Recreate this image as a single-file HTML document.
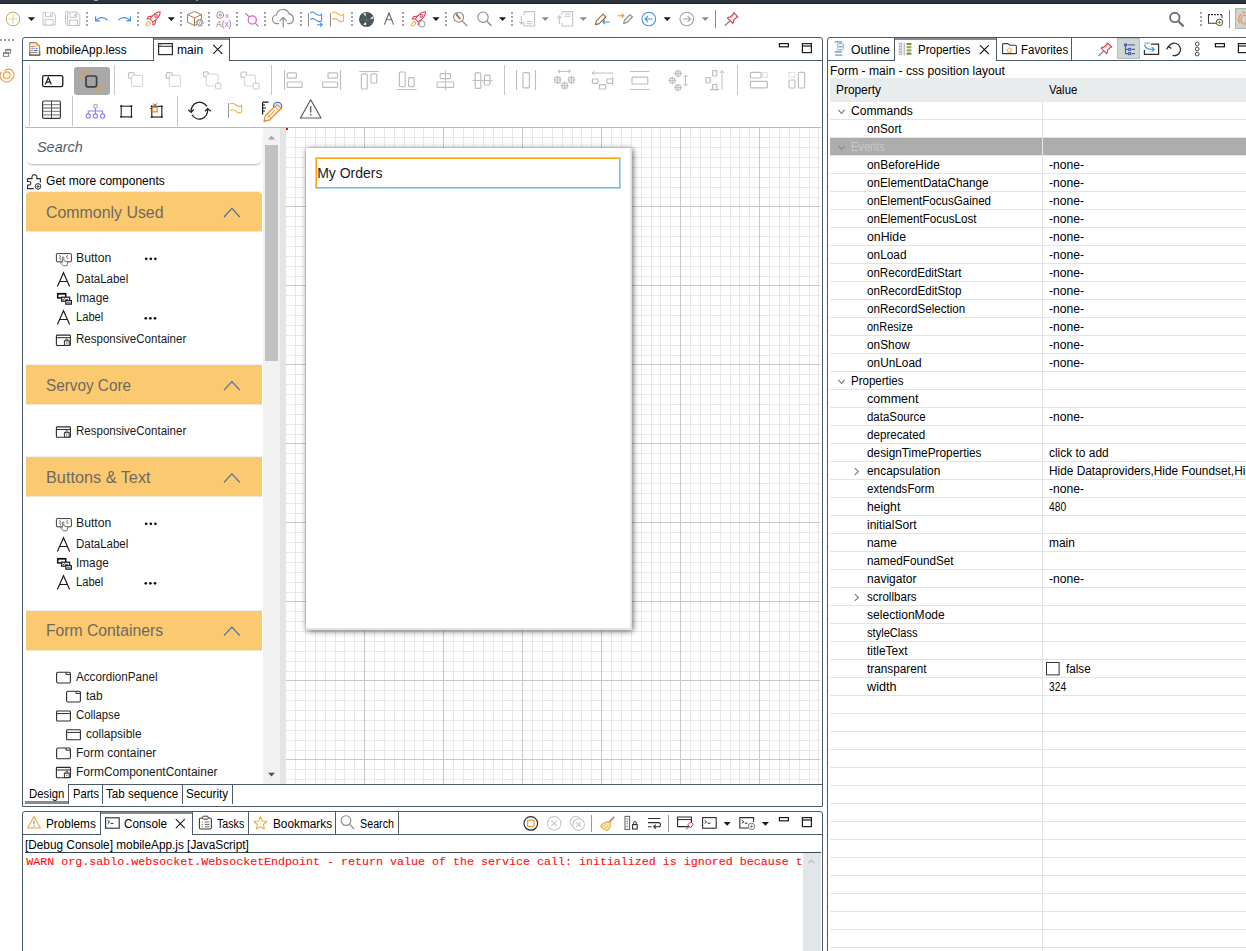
<!DOCTYPE html>
<html><head><meta charset="utf-8"><title>Servoy Developer</title>
<style>
html,body{margin:0;padding:0;}
body{width:1246px;height:951px;position:relative;overflow:hidden;background:#fff;font-family:"Liberation Sans",sans-serif;font-size:12px;}
#bg div{position:absolute;box-sizing:border-box;}
.t{position:absolute;white-space:pre;line-height:1;transform-origin:0 0;}
#ic{position:absolute;left:0;top:0;}
</style></head><body>
<div id="bg">
<div style="left:0px;top:0px;width:1246px;height:4px;background:#2a323b;"></div>
<div style="left:0px;top:3px;width:1246px;height:1px;background:#1c242c;"></div>
<div style="left:94px;top:0px;width:4px;height:1px;background:#9aa3b5;"></div>
<div style="left:196px;top:0px;width:2px;height:1px;background:#8a93a5;"></div>
<div style="left:22px;top:37px;width:801px;height:770px;background:#fff;border:1px solid #4b5a69;border-radius:3px 3px 0 0;"></div>
<div style="left:22px;top:60px;width:132px;height:1px;background:#4b5a69;"></div>
<div style="left:229px;top:60px;width:594px;height:1px;background:#4b5a69;"></div>
<div style="left:153px;top:38px;width:1px;height:23px;background:#4b5a69;"></div>
<div style="left:154px;top:38px;width:76px;height:2px;background:#8c8c8c;"></div>
<div style="left:229px;top:38px;width:1px;height:23px;background:#4b5a69;"></div>
<div style="left:29px;top:65px;width:1px;height:61px;background:#c6c6c6;"></div>
<div style="left:114px;top:65px;width:1px;height:30px;background:#c6c6c6;"></div>
<div style="left:271px;top:65px;width:1px;height:30px;background:#c6c6c6;"></div>
<div style="left:504px;top:65px;width:1px;height:30px;background:#c6c6c6;"></div>
<div style="left:737px;top:65px;width:1px;height:30px;background:#c6c6c6;"></div>
<div style="left:72px;top:96px;width:1px;height:30px;background:#c6c6c6;"></div>
<div style="left:177px;top:96px;width:1px;height:30px;background:#c6c6c6;"></div>
<div style="left:25px;top:127px;width:796px;height:1px;background:#b9b9b9;"></div>
<div style="left:74px;top:67px;width:36px;height:28px;background:#a9a9a9;border-radius:3px;"></div>
<div style="left:26px;top:128px;width:236px;height:36px;background:#fff;border-radius:0 0 6px 6px;box-shadow:0 2px 2px -1px rgba(0,0,0,.3);"></div>
<div style="left:26px;top:191px;width:236px;height:1px;background:#eef0f3;"></div>
<div style="left:26px;top:192px;width:236px;height:39px;background:#fbc96f;border-radius:4px 4px 0 0;"></div>
<div style="left:26px;top:231px;width:236px;height:1px;background:#f0e6cf;"></div>
<div style="left:26px;top:364px;width:236px;height:1px;background:#eef0f3;"></div>
<div style="left:26px;top:365px;width:236px;height:39px;background:#fbc96f;"></div>
<div style="left:26px;top:404px;width:236px;height:1px;background:#f0e6cf;"></div>
<div style="left:26px;top:456px;width:236px;height:1px;background:#eef0f3;"></div>
<div style="left:26px;top:457px;width:236px;height:39px;background:#fbc96f;"></div>
<div style="left:26px;top:496px;width:236px;height:1px;background:#f0e6cf;"></div>
<div style="left:26px;top:610px;width:236px;height:1px;background:#eef0f3;"></div>
<div style="left:26px;top:611px;width:236px;height:39px;background:#fbc96f;"></div>
<div style="left:26px;top:650px;width:236px;height:1px;background:#f0e6cf;"></div>
<div style="left:263px;top:128px;width:17px;height:656px;background:#f1f1f1;"></div>
<div style="left:265px;top:145px;width:13px;height:216px;background:#c1c1c1;"></div>
<div style="left:280px;top:128px;width:6px;height:656px;background:#e4e4e4;"></div>
<div style="left:286px;top:128px;width:534px;height:656px;background:#fff;"></div>
<svg style="position:absolute;left:0;top:0" width="1246" height="951" viewBox="0 0 1246 951"><rect x="295" y="128" width="1" height="656" fill="#e8e8e8"/><rect x="305" y="128" width="1" height="656" fill="#e8e8e8"/><rect x="315" y="128" width="1" height="656" fill="#e8e8e8"/><rect x="325" y="128" width="1" height="656" fill="#e8e8e8"/><rect x="335" y="128" width="1" height="656" fill="#e8e8e8"/><rect x="344" y="128" width="1" height="656" fill="#e8e8e8"/><rect x="354" y="128" width="1" height="656" fill="#e8e8e8"/><rect x="286" y="137" width="534" height="1" fill="#e8e8e8"/><rect x="286" y="147" width="534" height="1" fill="#e8e8e8"/><rect x="286" y="157" width="534" height="1" fill="#e8e8e8"/><rect x="286" y="167" width="534" height="1" fill="#e8e8e8"/><rect x="286" y="177" width="534" height="1" fill="#e8e8e8"/><rect x="286" y="187" width="534" height="1" fill="#e8e8e8"/><rect x="286" y="197" width="534" height="1" fill="#e8e8e8"/><rect x="374" y="128" width="1" height="656" fill="#e8e8e8"/><rect x="384" y="128" width="1" height="656" fill="#e8e8e8"/><rect x="394" y="128" width="1" height="656" fill="#e8e8e8"/><rect x="404" y="128" width="1" height="656" fill="#e8e8e8"/><rect x="414" y="128" width="1" height="656" fill="#e8e8e8"/><rect x="423" y="128" width="1" height="656" fill="#e8e8e8"/><rect x="433" y="128" width="1" height="656" fill="#e8e8e8"/><rect x="286" y="216" width="534" height="1" fill="#e8e8e8"/><rect x="286" y="226" width="534" height="1" fill="#e8e8e8"/><rect x="286" y="236" width="534" height="1" fill="#e8e8e8"/><rect x="286" y="246" width="534" height="1" fill="#e8e8e8"/><rect x="286" y="256" width="534" height="1" fill="#e8e8e8"/><rect x="286" y="266" width="534" height="1" fill="#e8e8e8"/><rect x="286" y="276" width="534" height="1" fill="#e8e8e8"/><rect x="453" y="128" width="1" height="656" fill="#e8e8e8"/><rect x="463" y="128" width="1" height="656" fill="#e8e8e8"/><rect x="473" y="128" width="1" height="656" fill="#e8e8e8"/><rect x="483" y="128" width="1" height="656" fill="#e8e8e8"/><rect x="493" y="128" width="1" height="656" fill="#e8e8e8"/><rect x="502" y="128" width="1" height="656" fill="#e8e8e8"/><rect x="512" y="128" width="1" height="656" fill="#e8e8e8"/><rect x="286" y="295" width="534" height="1" fill="#e8e8e8"/><rect x="286" y="305" width="534" height="1" fill="#e8e8e8"/><rect x="286" y="315" width="534" height="1" fill="#e8e8e8"/><rect x="286" y="325" width="534" height="1" fill="#e8e8e8"/><rect x="286" y="335" width="534" height="1" fill="#e8e8e8"/><rect x="286" y="345" width="534" height="1" fill="#e8e8e8"/><rect x="286" y="355" width="534" height="1" fill="#e8e8e8"/><rect x="532" y="128" width="1" height="656" fill="#e8e8e8"/><rect x="542" y="128" width="1" height="656" fill="#e8e8e8"/><rect x="552" y="128" width="1" height="656" fill="#e8e8e8"/><rect x="562" y="128" width="1" height="656" fill="#e8e8e8"/><rect x="572" y="128" width="1" height="656" fill="#e8e8e8"/><rect x="581" y="128" width="1" height="656" fill="#e8e8e8"/><rect x="591" y="128" width="1" height="656" fill="#e8e8e8"/><rect x="286" y="374" width="534" height="1" fill="#e8e8e8"/><rect x="286" y="384" width="534" height="1" fill="#e8e8e8"/><rect x="286" y="394" width="534" height="1" fill="#e8e8e8"/><rect x="286" y="404" width="534" height="1" fill="#e8e8e8"/><rect x="286" y="414" width="534" height="1" fill="#e8e8e8"/><rect x="286" y="424" width="534" height="1" fill="#e8e8e8"/><rect x="286" y="434" width="534" height="1" fill="#e8e8e8"/><rect x="611" y="128" width="1" height="656" fill="#e8e8e8"/><rect x="621" y="128" width="1" height="656" fill="#e8e8e8"/><rect x="631" y="128" width="1" height="656" fill="#e8e8e8"/><rect x="641" y="128" width="1" height="656" fill="#e8e8e8"/><rect x="651" y="128" width="1" height="656" fill="#e8e8e8"/><rect x="660" y="128" width="1" height="656" fill="#e8e8e8"/><rect x="670" y="128" width="1" height="656" fill="#e8e8e8"/><rect x="286" y="453" width="534" height="1" fill="#e8e8e8"/><rect x="286" y="463" width="534" height="1" fill="#e8e8e8"/><rect x="286" y="473" width="534" height="1" fill="#e8e8e8"/><rect x="286" y="483" width="534" height="1" fill="#e8e8e8"/><rect x="286" y="493" width="534" height="1" fill="#e8e8e8"/><rect x="286" y="503" width="534" height="1" fill="#e8e8e8"/><rect x="286" y="513" width="534" height="1" fill="#e8e8e8"/><rect x="690" y="128" width="1" height="656" fill="#e8e8e8"/><rect x="700" y="128" width="1" height="656" fill="#e8e8e8"/><rect x="710" y="128" width="1" height="656" fill="#e8e8e8"/><rect x="720" y="128" width="1" height="656" fill="#e8e8e8"/><rect x="730" y="128" width="1" height="656" fill="#e8e8e8"/><rect x="739" y="128" width="1" height="656" fill="#e8e8e8"/><rect x="749" y="128" width="1" height="656" fill="#e8e8e8"/><rect x="286" y="532" width="534" height="1" fill="#e8e8e8"/><rect x="286" y="542" width="534" height="1" fill="#e8e8e8"/><rect x="286" y="552" width="534" height="1" fill="#e8e8e8"/><rect x="286" y="562" width="534" height="1" fill="#e8e8e8"/><rect x="286" y="572" width="534" height="1" fill="#e8e8e8"/><rect x="286" y="582" width="534" height="1" fill="#e8e8e8"/><rect x="286" y="592" width="534" height="1" fill="#e8e8e8"/><rect x="769" y="128" width="1" height="656" fill="#e8e8e8"/><rect x="779" y="128" width="1" height="656" fill="#e8e8e8"/><rect x="789" y="128" width="1" height="656" fill="#e8e8e8"/><rect x="799" y="128" width="1" height="656" fill="#e8e8e8"/><rect x="809" y="128" width="1" height="656" fill="#e8e8e8"/><rect x="818" y="128" width="1" height="656" fill="#e8e8e8"/><rect x="286" y="611" width="534" height="1" fill="#e8e8e8"/><rect x="286" y="621" width="534" height="1" fill="#e8e8e8"/><rect x="286" y="631" width="534" height="1" fill="#e8e8e8"/><rect x="286" y="641" width="534" height="1" fill="#e8e8e8"/><rect x="286" y="651" width="534" height="1" fill="#e8e8e8"/><rect x="286" y="661" width="534" height="1" fill="#e8e8e8"/><rect x="286" y="671" width="534" height="1" fill="#e8e8e8"/><rect x="286" y="690" width="534" height="1" fill="#e8e8e8"/><rect x="286" y="700" width="534" height="1" fill="#e8e8e8"/><rect x="286" y="710" width="534" height="1" fill="#e8e8e8"/><rect x="286" y="720" width="534" height="1" fill="#e8e8e8"/><rect x="286" y="730" width="534" height="1" fill="#e8e8e8"/><rect x="286" y="740" width="534" height="1" fill="#e8e8e8"/><rect x="286" y="750" width="534" height="1" fill="#e8e8e8"/><rect x="286" y="769" width="534" height="1" fill="#e8e8e8"/><rect x="286" y="779" width="534" height="1" fill="#e8e8e8"/><rect x="364" y="128" width="1" height="656" fill="#c8c8c8"/><rect x="286" y="206" width="534" height="1" fill="#c8c8c8"/><rect x="443" y="128" width="1" height="656" fill="#c8c8c8"/><rect x="286" y="285" width="534" height="1" fill="#c8c8c8"/><rect x="522" y="128" width="1" height="656" fill="#c8c8c8"/><rect x="286" y="364" width="534" height="1" fill="#c8c8c8"/><rect x="601" y="128" width="1" height="656" fill="#c8c8c8"/><rect x="286" y="443" width="534" height="1" fill="#c8c8c8"/><rect x="680" y="128" width="1" height="656" fill="#c8c8c8"/><rect x="286" y="522" width="534" height="1" fill="#c8c8c8"/><rect x="759" y="128" width="1" height="656" fill="#c8c8c8"/><rect x="286" y="601" width="534" height="1" fill="#c8c8c8"/><rect x="286" y="680" width="534" height="1" fill="#c8c8c8"/><rect x="286" y="759" width="534" height="1" fill="#c8c8c8"/></svg>
<div style="left:286px;top:128px;width:2px;height:2px;background:#f00;"></div>
<div style="left:306px;top:148px;width:326px;height:482px;background:#fff;border:1px solid #e3e3e3;border-width:0 2px 2px 0;box-shadow:1px 1px 6px rgba(0,0,0,.6);"></div>
<div style="left:315px;top:157px;width:306px;height:32px;background:#fff;border:1px solid #a9daf3;box-shadow:inset 0 0 0 1px #f5a418;"></div>
<div style="left:23px;top:784px;width:799px;height:1px;background:#4b5a69;"></div>
<div style="left:23px;top:785px;width:45px;height:19px;background:#fff;"></div>
<div style="left:23px;top:784px;width:45px;height:1px;background:#fff;"></div>
<div style="left:68px;top:784px;width:1px;height:20px;background:#4b5a69;"></div>
<div style="left:102px;top:784px;width:1px;height:20px;background:#4b5a69;"></div>
<div style="left:182px;top:784px;width:1px;height:20px;background:#4b5a69;"></div>
<div style="left:232px;top:784px;width:1px;height:20px;background:#4b5a69;"></div>
<div style="left:25px;top:801px;width:43px;height:3px;background:#8a8a8a;"></div>
<div style="left:22px;top:811px;width:801px;height:160px;background:#fff;border:1px solid #4b5a69;border-radius:3px 3px 0 0;"></div>
<div style="left:22px;top:834px;width:78px;height:1px;background:#4b5a69;"></div>
<div style="left:192px;top:834px;width:631px;height:1px;background:#4b5a69;"></div>
<div style="left:100px;top:812px;width:1px;height:23px;background:#4b5a69;"></div>
<div style="left:101px;top:812px;width:91px;height:2px;background:#8c8c8c;"></div>
<div style="left:192px;top:812px;width:1px;height:23px;background:#4b5a69;"></div>
<div style="left:248px;top:812px;width:1px;height:23px;background:#4b5a69;"></div>
<div style="left:335px;top:812px;width:1px;height:23px;background:#4b5a69;"></div>
<div style="left:398px;top:812px;width:1px;height:23px;background:#4b5a69;"></div>
<div style="left:591px;top:815px;width:1px;height:17px;background:#9a9a9a;"></div>
<div style="left:668px;top:815px;width:1px;height:17px;background:#9a9a9a;"></div>
<div style="left:25px;top:852px;width:796px;height:1px;background:#3a4650;"></div>
<div style="left:803px;top:853px;width:18px;height:100px;background:#e2e6e9;"></div>
<div style="left:827px;top:37px;width:430px;height:930px;background:#fff;border:1px solid #4b5a69;border-radius:3px 0 0 0;"></div>
<div style="left:828px;top:60px;width:67px;height:1px;background:#4b5a69;"></div>
<div style="left:996px;top:60px;width:250px;height:1px;background:#4b5a69;"></div>
<div style="left:894px;top:38px;width:1px;height:23px;background:#4b5a69;"></div>
<div style="left:895px;top:38px;width:101px;height:2px;background:#8c8c8c;"></div>
<div style="left:996px;top:38px;width:1px;height:23px;background:#4b5a69;"></div>
<div style="left:1071px;top:38px;width:1px;height:23px;background:#4b5a69;"></div>
<div style="left:1117px;top:38px;width:23px;height:21px;background:#cfd6d5;border:1px solid #b4bebc;"></div>
<div style="left:830px;top:78px;width:420px;height:24px;background:#e9eced;"></div>
<div style="left:830px;top:119px;width:416px;height:1px;background:#e3e3e3;"></div>
<div style="left:830px;top:137px;width:416px;height:1px;background:#e3e3e3;"></div>
<div style="left:830px;top:155px;width:416px;height:1px;background:#e3e3e3;"></div>
<div style="left:830px;top:173px;width:416px;height:1px;background:#e3e3e3;"></div>
<div style="left:830px;top:191px;width:416px;height:1px;background:#e3e3e3;"></div>
<div style="left:830px;top:209px;width:416px;height:1px;background:#e3e3e3;"></div>
<div style="left:830px;top:227px;width:416px;height:1px;background:#e3e3e3;"></div>
<div style="left:830px;top:245px;width:416px;height:1px;background:#e3e3e3;"></div>
<div style="left:830px;top:263px;width:416px;height:1px;background:#e3e3e3;"></div>
<div style="left:830px;top:281px;width:416px;height:1px;background:#e3e3e3;"></div>
<div style="left:830px;top:299px;width:416px;height:1px;background:#e3e3e3;"></div>
<div style="left:830px;top:317px;width:416px;height:1px;background:#e3e3e3;"></div>
<div style="left:830px;top:335px;width:416px;height:1px;background:#e3e3e3;"></div>
<div style="left:830px;top:353px;width:416px;height:1px;background:#e3e3e3;"></div>
<div style="left:830px;top:371px;width:416px;height:1px;background:#e3e3e3;"></div>
<div style="left:830px;top:389px;width:416px;height:1px;background:#e3e3e3;"></div>
<div style="left:830px;top:407px;width:416px;height:1px;background:#e3e3e3;"></div>
<div style="left:830px;top:425px;width:416px;height:1px;background:#e3e3e3;"></div>
<div style="left:830px;top:443px;width:416px;height:1px;background:#e3e3e3;"></div>
<div style="left:830px;top:461px;width:416px;height:1px;background:#e3e3e3;"></div>
<div style="left:830px;top:479px;width:416px;height:1px;background:#e3e3e3;"></div>
<div style="left:830px;top:497px;width:416px;height:1px;background:#e3e3e3;"></div>
<div style="left:830px;top:515px;width:416px;height:1px;background:#e3e3e3;"></div>
<div style="left:830px;top:533px;width:416px;height:1px;background:#e3e3e3;"></div>
<div style="left:830px;top:551px;width:416px;height:1px;background:#e3e3e3;"></div>
<div style="left:830px;top:569px;width:416px;height:1px;background:#e3e3e3;"></div>
<div style="left:830px;top:587px;width:416px;height:1px;background:#e3e3e3;"></div>
<div style="left:830px;top:605px;width:416px;height:1px;background:#e3e3e3;"></div>
<div style="left:830px;top:623px;width:416px;height:1px;background:#e3e3e3;"></div>
<div style="left:830px;top:641px;width:416px;height:1px;background:#e3e3e3;"></div>
<div style="left:830px;top:659px;width:416px;height:1px;background:#e3e3e3;"></div>
<div style="left:830px;top:677px;width:416px;height:1px;background:#e3e3e3;"></div>
<div style="left:830px;top:695px;width:416px;height:1px;background:#e3e3e3;"></div>
<div style="left:830px;top:713px;width:416px;height:1px;background:#e3e3e3;"></div>
<div style="left:830px;top:731px;width:416px;height:1px;background:#e3e3e3;"></div>
<div style="left:830px;top:749px;width:416px;height:1px;background:#e3e3e3;"></div>
<div style="left:830px;top:767px;width:416px;height:1px;background:#e3e3e3;"></div>
<div style="left:830px;top:785px;width:416px;height:1px;background:#e3e3e3;"></div>
<div style="left:830px;top:803px;width:416px;height:1px;background:#e3e3e3;"></div>
<div style="left:830px;top:821px;width:416px;height:1px;background:#e3e3e3;"></div>
<div style="left:830px;top:839px;width:416px;height:1px;background:#e3e3e3;"></div>
<div style="left:830px;top:857px;width:416px;height:1px;background:#e3e3e3;"></div>
<div style="left:830px;top:875px;width:416px;height:1px;background:#e3e3e3;"></div>
<div style="left:830px;top:893px;width:416px;height:1px;background:#e3e3e3;"></div>
<div style="left:830px;top:911px;width:416px;height:1px;background:#e3e3e3;"></div>
<div style="left:830px;top:929px;width:416px;height:1px;background:#e3e3e3;"></div>
<div style="left:830px;top:947px;width:416px;height:1px;background:#e3e3e3;"></div>
<div style="left:830px;top:138px;width:420px;height:17px;background:#adadad;"></div>
<div style="left:1042px;top:102px;width:1px;height:849px;background:#e3e3e3;"></div>
<div style="left:1042px;top:138px;width:1px;height:17px;background:#e9e9e9;"></div>
<div style="left:1229px;top:10px;width:1px;height:18px;background:#8a8a8a;"></div>
<div style="left:1235px;top:8px;width:14px;height:21px;background:#cdd5d3;border:1px solid #aab5b3;"></div>
<div style="left:715px;top:10px;width:1px;height:18px;background:#8a8a8a;"></div>
</div>
<svg id="ic" width="1246" height="951" viewBox="0 0 1246 951" fill="none" stroke-linecap="butt">
<path d="M838.3 109.9 L841.5 113.3 L844.7 109.9" stroke="#7d7d7d" stroke-width="1.15"/>
<path d="M838.3 145.9 L841.5 149.3 L844.7 145.9" stroke="#8c8c8c" stroke-width="1.15"/>
<path d="M838.3 379.9 L841.5 383.3 L844.7 379.9" stroke="#7d7d7d" stroke-width="1.15"/>
<path d="M854.8 468.1 L858.4 471.5 L854.8 474.9" stroke="#7d7d7d" stroke-width="1.15"/>
<path d="M854.8 594.1 L858.4 597.5 L854.8 600.9" stroke="#7d7d7d" stroke-width="1.15"/>
<rect x="1046.5" y="662.5" width="12.6" height="12.4" fill="#fff" stroke="#333" stroke-width="1"/>
<circle cx="13" cy="19" r="6.8" stroke="#b7a656" stroke-width="1"/><path d="M13 14.3V23.7" stroke="#e8cf8e" stroke-width="1.1"/><path d="M8.3 19H17.7" stroke="#d3e09a" stroke-width="1.1"/>
<path d="M27.799999999999997 17.3h7.2l-3.6 3.8z" fill="#1a1a1a"/>
<g stroke="#c6c6c6" stroke-width="1" fill="#fff"><path d="M43.0 12.5h10.3l2 2v10.5h-12.3z"/><path d="M45.5 12.5v4.3h6.8v-4.3" fill="#fff"/><rect x="49.7" y="13.6" width="1.6" height="2.2" fill="#c6c6c6" stroke="none"/><rect x="45.1" y="19.6" width="8" height="5.4"/></g>
<g stroke="#cdcdcd" stroke-width="1" fill="#fff"><path d="M65.5 11.5h10.3l2 2v10.5h-12.3z"/><path d="M68 11.5v4.3h6.8v-4.3" fill="#fff"/><rect x="72.2" y="12.6" width="1.6" height="2.2" fill="#cdcdcd" stroke="none"/><rect x="67.6" y="18.6" width="8" height="5.4"/></g>
<g stroke="#c2c2c2" stroke-width="1" fill="#fff"><path d="M67.5 13.0h10.3l2 2v10.5h-12.3z"/><path d="M70 13.0v4.3h6.8v-4.3" fill="#fff"/><rect x="74.2" y="14.1" width="1.6" height="2.2" fill="#c2c2c2" stroke="none"/><rect x="69.6" y="20.1" width="8" height="5.4"/></g>
<rect x="86" y="12" width="2" height="2" fill="#a3a3a3"/>
<rect x="86" y="16" width="2" height="2" fill="#a3a3a3"/>
<rect x="86" y="20" width="2" height="2" fill="#a3a3a3"/>
<rect x="86" y="24" width="2" height="2" fill="#a3a3a3"/>
<path d="M95.6 16.6v4.2h4.2" stroke="#3d8fe8" stroke-width="1.2"/><path d="M96 20.5C98.5 17.3 103.8 16.2 107.6 20.2" stroke="#3d8fe8" stroke-width="1.2"/>
<path d="M130.4 16.6v4.2h-4.2" stroke="#3d8fe8" stroke-width="1.2"/><path d="M130 20.5C127.5 17.3 122.2 16.2 118.4 20.2" stroke="#3d8fe8" stroke-width="1.2"/>
<rect x="137" y="12" width="2" height="2" fill="#a3a3a3"/>
<rect x="137" y="16" width="2" height="2" fill="#a3a3a3"/>
<rect x="137" y="20" width="2" height="2" fill="#a3a3a3"/>
<rect x="137" y="24" width="2" height="2" fill="#a3a3a3"/>
<g transform="translate(155.3 16.6) rotate(45)" stroke="#e8364a" stroke-width="1" stroke-linejoin="round"><path d="M0 -7C2.6 -4.3 3.2 0.5 2 5.4H-2C-3.2 0.5 -2.6 -4.3 0 -7Z"/><circle cx="0" cy="-1" r="1.3"/><path d="M-2.7 2L-4.9 5.2L-4.2 7.6L-2.1 5.6M2.7 2L4.9 5.2L4.2 7.6L2.1 5.6"/><ellipse cx="0" cy="10" rx="1.5" ry="2.5" stroke="#f5a845"/></g>
<path d="M167.70000000000002 17.3h7.2l-3.6 3.8z" fill="#1a1a1a"/>
<rect x="180" y="12" width="2" height="2" fill="#a3a3a3"/>
<rect x="180" y="16" width="2" height="2" fill="#a3a3a3"/>
<rect x="180" y="20" width="2" height="2" fill="#a3a3a3"/>
<rect x="180" y="24" width="2" height="2" fill="#a3a3a3"/>
<g stroke="#a9794b" stroke-width="1" stroke-linejoin="round"><path d="M194.5 11.5L201.5 14.6V22.2L194.5 25.6L187.5 22.2V14.6Z"/><path d="M187.5 14.6L194.5 17.9L201.5 14.6M194.5 17.9V25.6"/></g><circle cx="199.6" cy="22.8" r="3.4" fill="#fff" stroke="#8d8d8d" stroke-width="1.2" stroke-dasharray="1.6 1"/><circle cx="199.6" cy="22.8" r="2.4" fill="#fff" stroke="#8d8d8d" stroke-width="1"/><circle cx="199.6" cy="22.8" r="0.8" fill="#8d8d8d"/>
<rect x="208" y="12" width="2" height="2" fill="#a3a3a3"/>
<rect x="208" y="16" width="2" height="2" fill="#a3a3a3"/>
<rect x="208" y="20" width="2" height="2" fill="#a3a3a3"/>
<rect x="208" y="24" width="2" height="2" fill="#a3a3a3"/>
<g font-family="Liberation Sans, sans-serif" font-size="8.5" stroke="none"><circle cx="220.2" cy="15" r="3.4" stroke="#8d8d8d" stroke-width="0.9" fill="none"/><circle cx="220.2" cy="15" r="1.2" stroke="#8d8d8d" stroke-width="0.9" fill="none"/><text x="225" y="17.6" fill="#e65ac8" font-size="8">x</text><text x="216" y="26.6" fill="#7d7d7d">A(</text><text x="224.6" y="26.6" fill="#e65ac8">x</text><text x="228.6" y="26.6" fill="#7d7d7d">)</text></g>
<rect x="236" y="12" width="2" height="2" fill="#a3a3a3"/>
<rect x="236" y="16" width="2" height="2" fill="#a3a3a3"/>
<rect x="236" y="20" width="2" height="2" fill="#a3a3a3"/>
<rect x="236" y="24" width="2" height="2" fill="#a3a3a3"/>
<circle cx="252.3" cy="20" r="4.1" stroke="#ea5cc8" stroke-width="1.3"/><path d="M255.4 23.2L258.3 26.3" stroke="#8d8d8d" stroke-width="1.2"/><path d="M245.4 13.2L249.3 17" stroke="#8d8d8d" stroke-width="1.1"/>
<rect x="264" y="12" width="2" height="2" fill="#a3a3a3"/>
<rect x="264" y="16" width="2" height="2" fill="#a3a3a3"/>
<rect x="264" y="20" width="2" height="2" fill="#a3a3a3"/>
<rect x="264" y="24" width="2" height="2" fill="#a3a3a3"/>
<g stroke="#8b8b8b" stroke-width="1.2" stroke-linecap="round" stroke-linejoin="round"><path d="M278.6 23.6h-1.6a4.3 4.3 0 0 1 -0.4 -8.6a6.4 6.4 0 0 1 12.4 -1.2a5 5 0 0 1 0.6 9.8h-1.9"/><path d="M283.2 27V17.6M280 20.6L283.2 17.4L286.4 20.6"/></g>
<rect x="300" y="12" width="2" height="2" fill="#a3a3a3"/>
<rect x="300" y="16" width="2" height="2" fill="#a3a3a3"/>
<rect x="300" y="20" width="2" height="2" fill="#a3a3a3"/>
<rect x="300" y="24" width="2" height="2" fill="#a3a3a3"/>
<path d="M308.5 13V26.6" stroke="#8d8d8d" stroke-width="1"/><path d="M310.2 13C312.4 11 314.4 12.4 316 13.8C317.6 15.2 319.6 16 321.6 14.2V20.6C319.6 22.4 317.6 21.6 316 20.2C314.4 18.8 312.4 17.6 310.2 19.6" stroke="#3d8fe8" stroke-width="1.05" stroke-linejoin="round"/><path d="M317 24.7H322M320.2 22.8L322.2 24.7L320.2 26.6" stroke="#3d8fe8" stroke-width="1.05"/>
<path d="M330.5 13V26.6" stroke="#8d8d8d" stroke-width="1"/><path d="M332.2 13C334.4 11 336.4 12.4 338 13.8C339.6 15.2 341.6 16 343.6 14.2V20.6C341.6 22.4 339.6 21.6 338 20.2C336.4 18.8 334.4 17.6 332.2 19.6" stroke="#f5aa45" stroke-width="1.05" stroke-linejoin="round"/>
<rect x="351" y="12" width="2" height="2" fill="#a3a3a3"/>
<rect x="351" y="16" width="2" height="2" fill="#a3a3a3"/>
<rect x="351" y="20" width="2" height="2" fill="#a3a3a3"/>
<rect x="351" y="24" width="2" height="2" fill="#a3a3a3"/>
<circle cx="366.5" cy="19.4" r="7.5" fill="#45525b"/><path d="M361 15L372 24M366.5 12V27M359.5 19.8H373.5" stroke="#5d7a63" stroke-width="0.6"/><g fill="#f4f6f6"><path d="M363 13.6L365.9 13.2L365.6 16.6Z"/><path d="M370 18.7L372.7 16.2L373 18.9Z"/><path d="M363.2 24.3L366 22L366 25.5Z"/></g>
<path d="M384.4 24.6L389 13L393.6 24.6" stroke="#5a5a5a" stroke-width="1.05"/><path d="M386.4 19.7H391.6" stroke="#5c68a8" stroke-width="1"/>
<rect x="402" y="12" width="2" height="2" fill="#a3a3a3"/>
<rect x="402" y="16" width="2" height="2" fill="#a3a3a3"/>
<rect x="402" y="20" width="2" height="2" fill="#a3a3a3"/>
<rect x="402" y="24" width="2" height="2" fill="#a3a3a3"/>
<g transform="translate(420.6 16.6) rotate(45)" stroke="#e8364a" stroke-width="1" stroke-linejoin="round"><path d="M0 -7C2.6 -4.3 3.2 0.5 2 5.4H-2C-3.2 0.5 -2.6 -4.3 0 -7Z"/><circle cx="0" cy="-1" r="1.3"/><path d="M-2.7 2L-4.9 5.2L-4.2 7.6L-2.1 5.6M2.7 2L4.9 5.2L4.2 7.6L2.1 5.6"/><ellipse cx="0" cy="10" rx="1.5" ry="2.5" stroke="#f5a845"/></g>
<circle cx="422" cy="24" r="3.1" fill="#fff" stroke="#9a9a9a" stroke-width="1"/>
<path d="M432.4 17.3h7.2l-3.6 3.8z" fill="#1a1a1a"/>
<rect x="445" y="12" width="2" height="2" fill="#a3a3a3"/>
<rect x="445" y="16" width="2" height="2" fill="#a3a3a3"/>
<rect x="445" y="20" width="2" height="2" fill="#a3a3a3"/>
<rect x="445" y="24" width="2" height="2" fill="#a3a3a3"/>
<circle cx="458.6" cy="17.2" r="5" stroke="#8b8b8b" stroke-width="1.1"/><path d="M462.2 20.9L467.2 26" stroke="#8b8b8b" stroke-width="1.2"/><path d="M456.3 14.6L460.4 19.2" stroke="#a56a3a" stroke-width="1.6"/><path d="M455.2 13.6l2.4 0.2l-0.6 2" stroke="#777" stroke-width="1"/>
<circle cx="483" cy="17.2" r="5.2" stroke="#8b8b8b" stroke-width="1.1"/><path d="M486.8 21L491.4 26" stroke="#8b8b8b" stroke-width="1.2"/>
<path d="M498.9 17.3h7.2l-3.6 3.8z" fill="#1a1a1a"/>
<rect x="511" y="12" width="2" height="2" fill="#a3a3a3"/>
<rect x="511" y="16" width="2" height="2" fill="#a3a3a3"/>
<rect x="511" y="20" width="2" height="2" fill="#a3a3a3"/>
<rect x="511" y="24" width="2" height="2" fill="#a3a3a3"/>
<g stroke="#c4c4c4" stroke-width="1.1"><path d="M524 11.6h10.6v14.4H524v-3M524 15v-3.4"/><path d="M526.5 21.5h6M526.5 23.7h6"/><path d="M521.4 16v8M519.2 21.6L521.4 24.2L523.6 21.6"/></g>
<path d="M541.6 17.3h7.2l-3.6 3.8z" fill="#8a8a8a"/>
<g stroke="#c4c4c4" stroke-width="1.1"><path d="M562 11.6h10.6v14.4H562v-3M562 15v-3.4"/><path d="M564.5 14h6M564.5 16.2h6"/><path d="M559.4 24v-8M557.2 18.4L559.4 15.8L561.6 18.4"/></g>
<path d="M579.6 17.3h7.2l-3.6 3.8z" fill="#8a8a8a"/>
<path d="M595.4 24.6L596.4 20.8L603 14.2L605.8 17L599.2 23.6Z" stroke="#a5683a" stroke-width="1.1" stroke-linejoin="round"/><path d="M609.6 22H603M605 19.9L602.8 22L605 24.1" stroke="#3d8fe8" stroke-width="1.1"/>
<path d="M617.6 15.8H623.6M621.6 13.7L623.8 15.8L621.6 17.9" stroke="#f2932e" stroke-width="1.1"/><path d="M623.6 23.4L624.6 20L630 14.6L632.4 17L627 22.4Z" stroke="#8b8b8b" stroke-width="1.1" stroke-linejoin="round"/>
<circle cx="648.8" cy="19" r="6.8" stroke="#3d8fe8" stroke-width="1.1"/><path d="M652.6 19H645.2M648 16.2L645.1 19L648 21.8" stroke="#3d8fe8" stroke-width="1.1"/>
<path d="M663.6 17.3h7.2l-3.6 3.8z" fill="#1a1a1a"/>
<circle cx="686.8" cy="19" r="6.8" stroke="#a3a3a3" stroke-width="1.1"/><path d="M683 19H690.4M687.6 16.2L690.5 19L687.6 21.8" stroke="#a3a3a3" stroke-width="1.1"/>
<path d="M701.6 17.3h7.2l-3.6 3.8z" fill="#8a8a8a"/>
<g transform="translate(724.3 11.6)"><path d="M0.6 14.2L5.4 9.4" stroke="#8a8a8a" stroke-width="1.4"/><path d="M3.2 6.4L8.6 11.8C9.4 10.6 9.6 9.6 9.4 8.6L12.6 5.4C13 5.6 13.4 5.4 13.6 5.2L9.4 1C9 1.4 9 1.8 9.2 2.2L6 5.4C5 5.2 4 5.6 3.2 6.4Z" stroke="#e8344c" stroke-width="1.1" stroke-linejoin="round" fill="#fff"/><path d="M7 6.2L9.8 3.4" stroke="#f7a86c" stroke-width="1"/></g>
<circle cx="1174.8" cy="17.4" r="4.7" stroke="#727272" stroke-width="1.9"/><path d="M1178.4 21.2L1183.6 26.4" stroke="#727272" stroke-width="2.3"/>
<rect x="1200" y="12" width="2" height="2" fill="#a3a3a3"/>
<rect x="1200" y="16" width="2" height="2" fill="#a3a3a3"/>
<rect x="1200" y="20" width="2" height="2" fill="#a3a3a3"/>
<rect x="1200" y="24" width="2" height="2" fill="#a3a3a3"/>
<path d="M1208.5 14.6V23.3H1216" stroke="#3c3c3c" stroke-width="1.1"/><path d="M1208 14.6h14.2" stroke="#3c3c3c" stroke-width="1.4" stroke-dasharray="2 1"/><path d="M1222 15v3" stroke="#3c3c3c" stroke-width="1"/><circle cx="1219.5" cy="22.4" r="3.2" fill="#fff" stroke="#4a4a4a" stroke-width="1"/><path d="M1217.7 22.4h3.6M1219.5 20.6v3.6" stroke="#7a9a3a" stroke-width="1"/>
<circle cx="1245.5" cy="19.6" r="4.6" stroke="#f2933a" stroke-width="1.2"/><path d="M1241 14.2a7.4 7.4 0 0 0 -1 9.2" stroke="#f2933a" stroke-width="1.2"/><path d="M1242.5 13.2l2.4 -1.4" stroke="#f2933a" stroke-width="1.2"/>
<rect x="0" y="39" width="2" height="2" fill="#9b9b9b"/>
<rect x="4" y="39" width="2" height="2" fill="#9b9b9b"/>
<rect x="8" y="39" width="2" height="2" fill="#9b9b9b"/>
<rect x="12" y="39" width="2" height="2" fill="#9b9b9b"/>
<rect x="5.6" y="50" width="5" height="3.2" stroke="#858585" stroke-width="1"/><path d="M5.1 49.7H11.1" stroke="#858585" stroke-width="1.6"/><rect x="3.6" y="53.2" width="5" height="3.2" fill="#fff" stroke="#858585" stroke-width="1"/><path d="M3.1 52.9H9.1" stroke="#858585" stroke-width="1.6"/>
<circle cx="6.8" cy="75.2" r="3.3" stroke="#f29a3c" stroke-width="1.1"/><path d="M1.4 71.8A6.4 6.4 0 1 0 12.4 78.2" stroke="#f29a3c" stroke-width="1.1"/><path d="M4.4 71A5.5 5.5 0 1 1 11.6 79.2" stroke="#f29a3c" stroke-width="1.1"/>
<rect x="42.6" y="75.6" width="20.2" height="11" rx="1.6" stroke="#1c1c1c" stroke-width="1.3"/><path d="M45.3 84.5L48.3 77.6L51.3 84.5M46.4 82.1H50.2" stroke="#1c1c1c" stroke-width="1.2"/>
<rect x="86" y="76" width="10.6" height="10.8" rx="2" fill="#a3a3a3" stroke="#3a4044" stroke-width="1.7"/><g stroke="#f29a35" stroke-width="1"><path d="M81.8 72L84.8 74.6M86.4 70V73.2M80 76.2H83.2"/><path d="M98.2 87.6L100.8 90.2M99.4 86.4H102.6M96.4 88.8V92.2"/></g>
<rect x="128.5" y="72.6" width="5.90" height="5.80" rx="1.2" stroke="#c2c2c2" stroke-width="1.2" fill="#fff"/>
<rect x="131.6" y="75.4" width="11.00" height="11.00" rx="1.2" stroke="#dadada" stroke-width="1.2" fill="#fff"/>
<rect x="166.25" y="72.6" width="5.90" height="5.80" rx="1.2" stroke="#c2c2c2" stroke-width="1.2" fill="#fff"/>
<rect x="169.35" y="75.4" width="11.00" height="11.00" rx="1.2" stroke="#dadada" stroke-width="1.2" fill="#fff"/>
<rect x="203.4" y="71.8" width="5.00" height="5.00" rx="1.2" stroke="#c2c2c2" stroke-width="1.2" fill="none"/>
<rect x="206.2" y="74.2" width="12.00" height="11.80" rx="2" stroke="#dadada" stroke-width="1.2" fill="#fff"/>
<rect x="215.6" y="83.4" width="5.40" height="5.60" rx="1.2" stroke="#d0d0d0" stroke-width="1.2" fill="#fff"/>
<rect x="241" y="72" width="5.40" height="5.40" rx="1.2" stroke="#c2c2c2" stroke-width="1.2" fill="none"/>
<rect x="244.6" y="75.2" width="10.80" height="10.80" rx="2" stroke="#dadada" stroke-width="1.2" fill="#fff"/>
<rect x="253.2" y="83.4" width="5.80" height="5.60" rx="1.2" stroke="#d0d0d0" stroke-width="1.2" fill="#fff"/>
<path d="M284.5 70V90" stroke="#bebebe" stroke-width="1.1"/><rect x="287.2" y="72.8" width="9.20" height="5.40" rx="0.9" stroke="#bebebe" stroke-width="1.2" fill="none"/><rect x="287.2" y="82" width="15.00" height="5.40" rx="0.9" stroke="#bebebe" stroke-width="1.2" fill="none"/>
<path d="M340.5 70V90" stroke="#bebebe" stroke-width="1.1"/><rect x="328" y="72.8" width="9.60" height="5.40" rx="0.9" stroke="#bebebe" stroke-width="1.2" fill="none"/><rect x="322.6" y="82" width="15.00" height="5.40" rx="0.9" stroke="#bebebe" stroke-width="1.2" fill="none"/>
<path d="M359.2 71.5H378.8" stroke="#bebebe" stroke-width="1.1"/><rect x="361.4" y="73.8" width="5.80" height="15.20" rx="0.9" stroke="#bebebe" stroke-width="1.2" fill="none"/><rect x="371" y="73.8" width="5.80" height="9.20" rx="0.9" stroke="#bebebe" stroke-width="1.2" fill="none"/>
<path d="M397 89.5H416.6" stroke="#bebebe" stroke-width="1.1"/><rect x="399.4" y="72" width="5.80" height="14.60" rx="0.9" stroke="#bebebe" stroke-width="1.2" fill="none"/><rect x="408.6" y="77.6" width="5.60" height="9.00" rx="0.9" stroke="#bebebe" stroke-width="1.2" fill="none"/>
<path d="M445.5 70.4V90" stroke="#bebebe" stroke-width="1.1"/><rect x="440.2" y="73.6" width="10.20" height="5.00" rx="0.9" stroke="#bebebe" stroke-width="1.2" fill="#fff"/><rect x="437" y="82" width="16.60" height="5.40" rx="0.9" stroke="#bebebe" stroke-width="1.2" fill="#fff"/><path d="M445.5 73.6V78.6M445.5 82V87.4" stroke="#bebebe" stroke-width="1.1"/>
<path d="M472.4 80.5H492.6" stroke="#bebebe" stroke-width="1.1"/><rect x="475.2" y="72.8" width="5.60" height="15.60" rx="0.9" stroke="#bebebe" stroke-width="1.2" fill="#fff"/><rect x="484.4" y="75.2" width="5.60" height="9.80" rx="0.9" stroke="#bebebe" stroke-width="1.2" fill="#fff"/><path d="M475.2 80.5H480.8M484.4 80.5H490" stroke="#bebebe" stroke-width="1.1"/>
<path d="M516.5 70V90M535.5 70V90" stroke="#bebebe" stroke-width="1.1"/><rect x="523" y="72.6" width="6.40" height="15.20" rx="0.9" stroke="#bebebe" stroke-width="1.2" fill="none"/>
<path d="M558 71.4H570.6M560.2 69.4L558 71.4L560.2 73.4M568.4 69.4L570.6 71.4L568.4 73.4" stroke="#bebebe" stroke-width="1"/><rect x="555.0" y="77.4" width="5.20" height="5.20" rx="0.8" stroke="#bebebe" stroke-width="1.2" fill="none"/><path d="M557.6 75.8V84.2M553.6 80H561.6" stroke="#bebebe" stroke-width="1"/><rect x="562.0" y="83.0" width="5.20" height="5.20" rx="0.8" stroke="#bebebe" stroke-width="1.2" fill="none"/><path d="M564.6 81.39999999999999V89.8M560.6 85.6H568.6" stroke="#bebebe" stroke-width="1"/><rect x="568.8" y="77.4" width="5.20" height="5.20" rx="0.8" stroke="#bebebe" stroke-width="1.2" fill="none"/><path d="M571.4 75.8V84.2M567.4 80H575.4" stroke="#bebebe" stroke-width="1"/>
<path d="M592 73H613M594.4 70.8L592 73L594.4 75.2" stroke="#bebebe" stroke-width="1"/><rect x="592.4" y="79" width="5.60" height="4.40" rx="0.8" stroke="#bebebe" stroke-width="1.2" fill="none"/><rect x="599.4" y="84.6" width="6.20" height="4.40" rx="0.8" stroke="#bebebe" stroke-width="1.2" fill="none"/><rect x="607" y="79" width="5.60" height="4.40" rx="0.8" stroke="#bebebe" stroke-width="1.2" fill="none"/><path d="M612.6 77V85.4" stroke="#bebebe" stroke-width="1.2"/>
<path d="M630 71.5H649.6M630 89.5H649.6" stroke="#bebebe" stroke-width="1.1"/><rect x="632" y="77.2" width="15.80" height="6.80" rx="0.9" stroke="#bebebe" stroke-width="1.2" fill="none"/>
<rect x="675.6" y="71.0" width="4.80" height="4.80" rx="0.8" stroke="#bebebe" stroke-width="1.2" fill="none"/><path d="M678 69.4V77.4M674 73.4H682" stroke="#bebebe" stroke-width="1"/><rect x="670.0" y="78.19999999999999" width="4.80" height="4.80" rx="0.8" stroke="#bebebe" stroke-width="1.2" fill="none"/><path d="M672.4 76.6V84.6M668.4 80.6H676.4" stroke="#bebebe" stroke-width="1"/><rect x="675.6" y="85.19999999999999" width="4.80" height="4.80" rx="0.8" stroke="#bebebe" stroke-width="1.2" fill="none"/><path d="M678 83.6V91.6M674 87.6H682" stroke="#bebebe" stroke-width="1"/><path d="M685.6 75V86M683.6 77.2L685.6 75L687.6 77.2M683.6 83.8L685.6 86L687.6 83.8" stroke="#bebebe" stroke-width="1"/>
<rect x="712.6" y="70.6" width="4.20" height="5.40" rx="0.8" stroke="#bebebe" stroke-width="1.2" fill="none"/><rect x="706" y="77.6" width="4.40" height="5.40" rx="0.8" stroke="#bebebe" stroke-width="1.2" fill="none"/><rect x="712.6" y="84.4" width="4.20" height="5.20" rx="0.8" stroke="#bebebe" stroke-width="1.2" fill="none"/><path d="M710 89.6H719" stroke="#bebebe" stroke-width="1.2"/><path d="M722 89.6V70.6M719.8 73L722 70.6L724.2 73" stroke="#bebebe" stroke-width="1"/>
<rect x="750.4" y="72.4" width="10.60" height="5.60" rx="0.9" stroke="#bebebe" stroke-width="1.2" fill="none"/><rect x="762.6" y="72.6" width="4.8" height="4.8" stroke="#bebebe" stroke-width="1" stroke-dasharray="1 1"/><rect x="750.4" y="81.4" width="17.00" height="6.40" rx="1.0" stroke="#bebebe" stroke-width="1.2" fill="none"/>
<rect x="788.8" y="72.4" width="6" height="4.8" stroke="#bebebe" stroke-width="1" stroke-dasharray="1 1"/><rect x="789" y="80" width="6.00" height="8.00" rx="0.9" stroke="#bebebe" stroke-width="1.2" fill="none"/><rect x="798.4" y="72.4" width="6.20" height="15.60" rx="1.0" stroke="#bebebe" stroke-width="1.2" fill="none"/>
<rect x="42.6" y="101" width="17.8" height="17.4" rx="1.4" fill="#fff" stroke="#3b3b3b" stroke-width="1.2"/><path d="M43 104.6H60M43 108H60M43 111.4H60M43 114.8H60" stroke="#8f8f8f" stroke-width="1.3"/><path d="M51.5 101V118.4" stroke="#3b3b3b" stroke-width="0.9"/>
<circle cx="95.4" cy="106.2" r="1.9" stroke="#9a9a9a" stroke-width="1"/><g stroke="#8b80f5" stroke-width="1.1"><path d="M95.4 108.2V113.8M88.2 113.8V111H102.6V113.8"/><circle cx="88.2" cy="116" r="2.1"/><circle cx="95.4" cy="116" r="2.1"/><circle cx="102.6" cy="116" r="2.1"/></g>
<rect x="121.2" y="106.2" width="10.2" height="10.6" stroke="#1c1c1c" stroke-width="1.05"/><path d="M120 106.2h2M130.4 106.2h2M120 116.8h2M130.4 116.8h2M121.2 105v2M131.4 105v2M121.2 116v2M131.4 116v2" stroke="#1c1c1c" stroke-width="1"/><path d="M121.2 117H131.4" stroke="#5a7a5a" stroke-width="0.8"/>
<rect x="151.8" y="106.4" width="10" height="10.6" stroke="#2c2c2c" stroke-width="1.2"/><path d="M150.6 106.4h2M160.8 106.4h2M150.6 117h2M160.8 117h2M151.8 105.2v2M161.8 105.2v2M151.8 116v2M161.8 116v2" stroke="#2c2c2c" stroke-width="1"/><rect x="152.6" y="107.2" width="4.6" height="4.6" stroke="#f28a2e" stroke-width="1.3" fill="#fff"/><path d="M153.4 103.6l1.6 2l1.6 -2M149.8 108.6h1.4" stroke="#2c2c2c" stroke-width="0.9"/>
<g stroke="#1c1c1c" stroke-width="1.3"><path d="M191.2 111.6A8.4 8.4 0 0 1 206.8 106.4"/><path d="M207.6 109.4A8.4 8.4 0 0 1 192 114.8"/><path d="M188.2 109.8L191.2 112.4L193.8 109.4"/><path d="M205 111.4L207.6 108.6L210.8 111.2"/></g>
<path d="M228.5 102.8V118" stroke="#9a9a9a" stroke-width="1"/><path d="M230.2 104.2C232.4 102.2 234.4 103.6 236 105C237.6 106.4 239.6 107.2 241.6 105.4V111.8C239.6 113.6 237.6 112.8 236 111.4C234.4 110 232.4 108.8 230.2 110.8" stroke="#f5aa45" stroke-width="1.05" stroke-linejoin="round"/>
<circle cx="277.6" cy="106.4" r="4" stroke="#2f80e0" stroke-width="1.3" fill="#fff"/><path d="M262.6 102.2H268.6M262.6 102.2V114.4M262.6 105H265M262.6 108H266M262.6 111H265" stroke="#1c1c1c" stroke-width="1.2"/><path d="M264 121.4L265.4 115.6L277.4 104.6L281 108.2L269.6 120Z" fill="#fff" stroke="#ee8f2f" stroke-width="1.3" stroke-linejoin="round"/><path d="M267.6 114.4L271.6 118.2M275 106.8L278.8 110.6M267.4 118L274.8 110" stroke="#ee8f2f" stroke-width="1"/><path d="M264 121.4l2.4 -0.6l-1.8 -1.8z" fill="#ee8f2f"/>
<path d="M310.7 99.8L321 118H300.4Z" stroke="#555c61" stroke-width="1.2" stroke-linejoin="round"/><path d="M310.7 106V112.6" stroke="#555c61" stroke-width="1.3"/><rect x="310" y="114.2" width="1.4" height="1.5" fill="#555c61"/>
<rect x="779.4" y="43.6" width="9" height="3.2" stroke="#1c1c1c" stroke-width="1.2"/>
<rect x="802.4" y="43.6" width="9" height="9" stroke="#1c1c1c" stroke-width="1.2"/><path d="M802.4 46H811.4" stroke="#1c1c1c" stroke-width="1.2"/>
<rect x="779.4" y="817.6" width="9" height="3.2" stroke="#1c1c1c" stroke-width="1.2"/>
<rect x="802.4" y="817.6" width="9" height="9" stroke="#1c1c1c" stroke-width="1.2"/><path d="M802.4 820H811.4" stroke="#1c1c1c" stroke-width="1.2"/>
<rect x="1215.4" y="43.6" width="9" height="3.2" stroke="#1c1c1c" stroke-width="1.2"/>
<rect x="1238.4" y="43.6" width="9" height="9" stroke="#1c1c1c" stroke-width="1.2"/><path d="M1238.4 46H1247.4" stroke="#1c1c1c" stroke-width="1.2"/>
<path d="M29.8 42.6H36.2L39.6 46V55H29.8Z" fill="#eef4fa" stroke="#a8844c" stroke-width="1.1" stroke-linejoin="round"/><path d="M29.8 51.4V55.2H39.6V51.4" stroke="#8c6a5c" stroke-width="1.4"/><path d="M36.2 42.6V46H39.6Z" fill="#f5b045" stroke="#f5b045" stroke-width="0.6"/><path d="M31.2 46.5H33" stroke="#f0508a" stroke-width="1"/><path d="M33.2 46.5H35" stroke="#f29040" stroke-width="1"/><path d="M31.2 48.5H35" stroke="#9aa8c0" stroke-width="1"/><path d="M36 48.5H37.4" stroke="#4a6ad0" stroke-width="1"/><path d="M31.2 50.5H33" stroke="#f0508a" stroke-width="1"/><path d="M34.2 50.5H37.4" stroke="#3a6ac8" stroke-width="1"/><path d="M31.2 52.5H37.4" stroke="#6a9a7a" stroke-width="1"/>
<rect x="158.6" y="43.6" width="13.8" height="11" stroke="#2c2c2c" stroke-width="1.2"/><path d="M158.6 46.3H172.4" stroke="#2c2c2c" stroke-width="1"/><path d="M160 44.9h2" stroke="#888" stroke-width="0.8"/>
<path d="M213.2 44.8L222.2 53.8M222.2 44.8L213.2 53.8" stroke="#1c1c1c" stroke-width="1.1"/>
<path d="M835.6 41.9H841.4" stroke="#6db3f5" stroke-width="1.9" stroke-linecap="round"/><path d="M835.6 51.8H841.4" stroke="#6db3f5" stroke-width="1.9" stroke-linecap="round"/><rect x="837.2" y="43.7" width="6.4" height="2.6" rx="1.3" stroke="#a3a3a3" stroke-width="1"/><rect x="837.2" y="47" width="6.4" height="2.6" rx="1.3" stroke="#a3a3a3" stroke-width="1"/><path d="M835.8 55.2H841.6" stroke="#b0b0b0" stroke-width="1.7" stroke-linecap="round"/>
<rect x="899.2" y="43.1" width="2.6" height="1.9" stroke="#a9a9a9" stroke-width="0.8"/>
<rect x="906.4" y="42.9" width="5.2" height="2.2" rx="0.8" fill="#6d8a5c"/>
<rect x="899.2" y="46.300000000000004" width="2.6" height="1.9" stroke="#a9a9a9" stroke-width="0.8"/>
<rect x="906.4" y="46.1" width="5.2" height="2.2" rx="0.8" fill="#b9a24c"/>
<rect x="899.2" y="49.5" width="2.6" height="1.9" stroke="#a9a9a9" stroke-width="0.8"/>
<rect x="906.4" y="49.3" width="5.2" height="2.2" rx="0.8" fill="#b9a24c"/>
<rect x="899.2" y="52.7" width="2.6" height="1.9" stroke="#a9a9a9" stroke-width="0.8"/>
<rect x="906.4" y="52.5" width="5.2" height="2.2" rx="0.8" fill="#6d8a5c"/>
<path d="M904.2 43V55.4" stroke="#9a9a9a" stroke-width="1"/>
<path d="M980 45.2L988.8 54M988.8 45.2L980 54" stroke="#1c1c1c" stroke-width="1.1"/>
<path d="M1002.6 53.6V44.6Q1002.6 43.6 1003.6 43.6H1008L1009.6 45.2H1015.4Q1016.4 45.2 1016.4 46.2V53.6Z" stroke="#3c3c3c" stroke-width="1.1" stroke-linejoin="round"/><path d="M1009.4 47.4l0.9 1.8l2 0.3l-1.5 1.4l0.4 2l-1.8 -1l-1.8 1l0.4 -2l-1.5 -1.4l2 -0.3z" stroke="#f2a83e" stroke-width="0.9" fill="#fff"/>
<g transform="translate(1098 41.8)"><path d="M0.6 14.2L5.4 9.4" stroke="#8a8a8a" stroke-width="1.4"/><path d="M3.2 6.4L8.6 11.8C9.4 10.6 9.6 9.6 9.4 8.6L12.6 5.4C13 5.6 13.4 5.4 13.6 5.2L9.4 1C9 1.4 9 1.8 9.2 2.2L6 5.4C5 5.2 4 5.6 3.2 6.4Z" stroke="#e8344c" stroke-width="1.1" stroke-linejoin="round" fill="#fff"/><path d="M7 6.2L9.8 3.4" stroke="#f7a86c" stroke-width="1"/></g>
<g stroke="#4b5fae" stroke-width="1.1"><rect x="1124.6" y="44" width="1.8" height="1.8"/><path d="M1127.4 44.9H1135"/><path d="M1125.5 46V53.6H1128.4M1125.5 49.4H1128.4"/><rect x="1128.6" y="48.4" width="2" height="2"/><rect x="1128.6" y="52.6" width="2" height="2"/><path d="M1131.6 49.4H1135M1131.6 53.6H1135"/></g>
<path d="M1151 44.2H1158.6V54.4H1144.4V50" stroke="#2c2c2c" stroke-width="1.2"/><path d="M1144.4 43.2H1150" stroke="#8fc0f5" stroke-width="1.6"/><path d="M1144.6 44.6C1144.8 48.6 1148 49.6 1154 49.4M1151.6 47L1154.4 49.4L1151.6 51.8" stroke="#4a9bf0" stroke-width="1.2"/>
<path d="M1168.4 47.4A6.2 6.2 0 1 1 1172.6 55.4" stroke="#2c2c2c" stroke-width="1.2"/><path d="M1166.6 49.4L1168.4 46.4L1171.4 48.6" stroke="#2c2c2c" stroke-width="1.2"/>
<circle cx="1197.2" cy="44" r="1.9" stroke="#4a4a4a" stroke-width="1"/>
<circle cx="1197.2" cy="49" r="1.9" stroke="#4a4a4a" stroke-width="1"/>
<circle cx="1197.2" cy="54" r="1.9" stroke="#4a4a4a" stroke-width="1"/>
<path d="M34 816.6L40.4 828H27.6Z" stroke="#f2a43a" stroke-width="1.1" stroke-linejoin="round"/><path d="M34 820.4V824.6" stroke="#8a8a8a" stroke-width="1.1"/><rect x="33.4" y="825.6" width="1.2" height="1.2" fill="#8a8a8a"/>
<rect x="105.6" y="817.8" width="13.6" height="10.4" stroke="#2c2c2c" stroke-width="1.1"/><path d="M107.6 820.4L109.6 822L107.6 823.6M110.6 823.4H113.4" stroke="#2c2c2c" stroke-width="1"/>
<path d="M175.8 819.2L184.8 828.2M184.8 819.2L175.8 828.2" stroke="#1c1c1c" stroke-width="1.1"/>
<rect x="199.4" y="818" width="12" height="11" rx="1.4" stroke="#3c3c3c" stroke-width="1.1"/><rect x="202.6" y="816.2" width="5.6" height="3" rx="1" fill="#fff" stroke="#3c3c3c" stroke-width="1"/><path d="M204.6 822H209.4M204.6 824.4H209.4M204.6 826.8H209.4" stroke="#6a6a6a" stroke-width="1"/><path d="M201.6 822H203M201.6 824.4H203M201.6 826.8H203" stroke="#6a9a5a" stroke-width="1"/>
<path d="M260.4 816.8L262.3 821L266.8 821.5L263.4 824.5L264.4 829L260.4 826.7L256.4 829L257.4 824.5L254 821.5L258.5 821Z" stroke="#f2a83e" stroke-width="1.1" stroke-linejoin="round"/>
<circle cx="346" cy="820.6" r="4.8" stroke="#8b8b8b" stroke-width="1.1"/><path d="M349.6 824.2L354.2 829" stroke="#8b8b8b" stroke-width="1.2"/>
<circle cx="530.8" cy="823.4" r="6.8" stroke="#2c2c2c" stroke-width="1.2"/><rect x="527.6" y="820.2" width="6.4" height="6.4" rx="1" stroke="#f29a35" stroke-width="1.2"/>
<circle cx="554.2" cy="823.4" r="6.8" stroke="#c6c6c6" stroke-width="1.1"/><path d="M551.4 820.6L557 826.2M557 820.6L551.4 826.2" stroke="#c6c6c6" stroke-width="1.1"/>
<circle cx="575.8" cy="822" r="5.6" stroke="#c6c6c6" stroke-width="1.1"/><circle cx="578.6" cy="824.6" r="5.8" fill="#fff" stroke="#c6c6c6" stroke-width="1.1"/><path d="M576.2 822.2L581 827M581 822.2L576.2 827" stroke="#c6c6c6" stroke-width="1.1"/>
<path d="M614.2 816.8L609.2 822.4" stroke="#a98a6c" stroke-width="1.7"/><path d="M608.6 821.6L610.4 823.4C610.6 826.2 609.4 829 607 830.6C604.8 830 602 828.2 600.6 826.2C602.4 823.6 605.6 821.8 608.6 821.6Z" fill="#fde9b8" stroke="#f2a83e" stroke-width="1.1" stroke-linejoin="round"/><path d="M602.6 827.4L606.4 823.6M604.6 829L608.4 824.8" stroke="#f2a83e" stroke-width="0.8"/>
<rect x="625" y="816.4" width="4.6" height="13" stroke="#6a6a6a" stroke-width="1.1"/><path d="M626.4 819H628.2M626.4 821.4H628.2M626.4 823.8H628.2M626.4 826.4H628.2" stroke="#6a6a6a" stroke-width="0.9"/><rect x="632.6" y="824.6" width="4.6" height="4.4" stroke="#2c2c2c" stroke-width="1.1"/><path d="M633.6 824.4V822.8A1.3 1.3 0 0 1 636.2 822.8V824.4" stroke="#2c2c2c" stroke-width="1"/>
<path d="M648 818.5H660.4M648 822.6H658.4A2 2 0 0 1 658.4 826.7H654M655.8 824.7L653.8 826.7L655.8 828.7M648 826.7H651.6" stroke="#2c2c2c" stroke-width="1.1"/>
<path d="M677.6 817H691.4V826.6H677.6Z" stroke="#2c2c2c" stroke-width="1.1"/><path d="M677.6 819.6H691.4" stroke="#2c2c2c" stroke-width="1"/><path d="M686 829.4L688.6 826.8" stroke="#8a8a8a" stroke-width="1.1"/><path d="M687.6 824.8L690.6 827.8L693.2 824.2L691 822Z" fill="#fff" stroke="#e8344c" stroke-width="1" stroke-linejoin="round"/>
<rect x="702.6" y="817.6" width="13.6" height="10.6" stroke="#2c2c2c" stroke-width="1.1"/><path d="M704.6 820.2L706.6 821.8L704.6 823.4M707.6 823.2H710.4" stroke="#2c2c2c" stroke-width="1"/>
<path d="M723.6 821.9h7.2l-3.6 3.8z" fill="#1a1a1a"/>
<path d="M748 828H739.8V817.6H753.6V822" stroke="#2c2c2c" stroke-width="1.1"/><path d="M741.8 820.2L743.8 821.8L741.8 823.4M744.8 823.2H747.6" stroke="#2c2c2c" stroke-width="1"/><circle cx="751.4" cy="826.4" r="3.2" fill="#fff" stroke="#7a7a7a" stroke-width="1"/><path d="M749.6 826.4H753.2M751.4 824.6V828.2" stroke="#8a9a4a" stroke-width="1"/>
<path d="M761.8 821.9h7.2l-3.6 3.8z" fill="#1a1a1a"/>
<path d="M808.4 863.2L811.4 860.2L814.4 863.2" stroke="#b5bcc2" stroke-width="1.2"/>
<path d="M27.5 178.6H32.2C31.4 176.8 32.2 174.6 34.4 174.6C36.6 174.6 37.4 176.8 36.6 178.6H40.4V182.4" stroke="#2c2c2c" stroke-width="1.1" stroke-linejoin="round"/><path d="M27.5 178.6V181.5H29A1.8 1.8 0 0 1 29 185.1H27.5V188.6H33.8" stroke="#2c2c2c" stroke-width="1.1" stroke-linejoin="round"/><circle cx="38" cy="186.4" r="2.8" stroke="#2c2c2c" stroke-width="1"/><path d="M36.4 186.4H39.6M38 184.8V188" stroke="#2c2c2c" stroke-width="0.9"/>
<path d="M224 217.0L231.9 208.4L239.8 217.0" stroke="#4d68a6" stroke-width="1.15"/>
<path d="M224 390.20000000000005L231.9 381.6L239.8 390.20000000000005" stroke="#4d68a6" stroke-width="1.15"/>
<path d="M224 482.40000000000003L231.9 473.8L239.8 482.40000000000003" stroke="#4d68a6" stroke-width="1.15"/>
<path d="M224 635.6L231.9 627L239.8 635.6" stroke="#4d68a6" stroke-width="1.15"/>
<path d="M268 139.6H275L271.5 135.8Z" fill="#a3a3a3"/>
<path d="M268 772.8H275L271.5 776.6Z" fill="#505050"/>
<g transform="translate(55.8 253)"><rect x="0.6" y="0.6" width="15" height="8.2" rx="0.6" stroke="#3c3c3c" stroke-width="1" fill="#fff"/><path d="M3.4 2.6L5.2 3.6M3 5H5M4 7.2L5.4 6.2M12.2 2.6L10.4 3.6M12.6 5H10.6" stroke="#555" stroke-width="0.9"/><path d="M6.6 4.2V9.6L5.2 8.8L4.6 9.8L7.4 12.8H11.2L12 9.2L8 7.6V4.2Q7.3 3.4 6.6 4.2Z" fill="#fff" stroke="#6a6a6a" stroke-width="0.9" stroke-linejoin="round"/></g>
<circle cx="146.2" cy="258.8" r="1.35" fill="#111"/><circle cx="150.79999999999998" cy="258.8" r="1.35" fill="#111"/><circle cx="155.39999999999998" cy="258.8" r="1.35" fill="#111"/>
<path d="M57.4 286.5L63.5 272.7L69.6 286.5M59.8 281.5H67.2" stroke="#1c1c1c" stroke-width="1.15" stroke-linejoin="miter"/>
<g transform="translate(57 293)"><rect x="0.7" y="0.9" width="8" height="4" fill="#fff" stroke="#111" stroke-width="1.5"/><path d="M0.2 0.5H9.2" stroke="#111" stroke-width="1.2"/><rect x="4.6" y="4.2" width="8" height="4" fill="#fff" stroke="#222" stroke-width="1.3"/><path d="M5.6 7.4L7.4 5.6L9 7.2L10.2 6L11.8 7.6" stroke="#222" stroke-width="0.9"/><rect x="8.8" y="7.6" width="5.6" height="3.6" fill="#fff" stroke="#222" stroke-width="1.2"/><path d="M9.6 10.6L11 9.2L12.2 10.4L13.4 9" stroke="#222" stroke-width="0.9"/></g>
<path d="M57.4 324.5L63.5 310.7L69.6 324.5M59.8 319.5H67.2" stroke="#1c1c1c" stroke-width="1.15" stroke-linejoin="miter"/>
<circle cx="145.8" cy="318.3" r="1.35" fill="#111"/><circle cx="150.4" cy="318.3" r="1.35" fill="#111"/><circle cx="155.0" cy="318.3" r="1.35" fill="#111"/>
<g transform="translate(55.8 518)"><rect x="0.6" y="0.6" width="15" height="8.2" rx="0.6" stroke="#3c3c3c" stroke-width="1" fill="#fff"/><path d="M3.4 2.6L5.2 3.6M3 5H5M4 7.2L5.4 6.2M12.2 2.6L10.4 3.6M12.6 5H10.6" stroke="#555" stroke-width="0.9"/><path d="M6.6 4.2V9.6L5.2 8.8L4.6 9.8L7.4 12.8H11.2L12 9.2L8 7.6V4.2Q7.3 3.4 6.6 4.2Z" fill="#fff" stroke="#6a6a6a" stroke-width="0.9" stroke-linejoin="round"/></g>
<circle cx="146.2" cy="523.8" r="1.35" fill="#111"/><circle cx="150.79999999999998" cy="523.8" r="1.35" fill="#111"/><circle cx="155.39999999999998" cy="523.8" r="1.35" fill="#111"/>
<path d="M57.4 551.5L63.5 537.7L69.6 551.5M59.8 546.5H67.2" stroke="#1c1c1c" stroke-width="1.15" stroke-linejoin="miter"/>
<g transform="translate(57 558)"><rect x="0.7" y="0.9" width="8" height="4" fill="#fff" stroke="#111" stroke-width="1.5"/><path d="M0.2 0.5H9.2" stroke="#111" stroke-width="1.2"/><rect x="4.6" y="4.2" width="8" height="4" fill="#fff" stroke="#222" stroke-width="1.3"/><path d="M5.6 7.4L7.4 5.6L9 7.2L10.2 6L11.8 7.6" stroke="#222" stroke-width="0.9"/><rect x="8.8" y="7.6" width="5.6" height="3.6" fill="#fff" stroke="#222" stroke-width="1.2"/><path d="M9.6 10.6L11 9.2L12.2 10.4L13.4 9" stroke="#222" stroke-width="0.9"/></g>
<path d="M57.4 589.5L63.5 575.7L69.6 589.5M59.8 584.5H67.2" stroke="#1c1c1c" stroke-width="1.15" stroke-linejoin="miter"/>
<circle cx="145.8" cy="583.3" r="1.35" fill="#111"/><circle cx="150.4" cy="583.3" r="1.35" fill="#111"/><circle cx="155.0" cy="583.3" r="1.35" fill="#111"/>
<g transform="translate(55.8 334.5)"><rect x="0.6" y="0.6" width="14" height="10.4" rx="0.8" stroke="#2c2c2c" stroke-width="1.1" fill="#fff"/><path d="M0.6 3.2H14.6" stroke="#2c2c2c" stroke-width="1"/><rect x="8.6" y="6.4" width="4.8" height="4.4" fill="#fff" stroke="#2c2c2c" stroke-width="1"/><path d="M10 6.2V5.4A1 1 0 0 1 12 5.4V6.2M11 8v1.4" stroke="#2c2c2c" stroke-width="0.9"/></g>
<g transform="translate(55.8 426.3)"><rect x="0.6" y="0.6" width="14" height="10.4" rx="0.8" stroke="#2c2c2c" stroke-width="1.1" fill="#fff"/><path d="M0.6 3.2H14.6" stroke="#2c2c2c" stroke-width="1"/><rect x="8.6" y="6.4" width="4.8" height="4.4" fill="#fff" stroke="#2c2c2c" stroke-width="1"/><path d="M10 6.2V5.4A1 1 0 0 1 12 5.4V6.2M11 8v1.4" stroke="#2c2c2c" stroke-width="0.9"/></g>
<path d="M56.6 673.6Q56.6 672.2 58 672.2H69Q70.4 672.2 70.4 673.6V681.6Q70.4 683.0 69 683.0H58Q56.6 683.0 56.6 681.6Z" stroke="#2c2c2c" stroke-width="1.1"/><path d="M66 672.2V674.4H70.4" stroke="#2c2c2c" stroke-width="1"/>
<path d="M66.6 692.6Q66.6 691.2 68 691.2H79Q80.4 691.2 80.4 692.6V700.6Q80.4 702.0 79 702.0H68Q66.6 702.0 66.6 700.6Z" stroke="#2c2c2c" stroke-width="1.1"/><path d="M76 691.2V693.4H80.4" stroke="#2c2c2c" stroke-width="1"/>
<rect x="56.6" y="711.0" width="13.8" height="10" rx="0.8" stroke="#2c2c2c" stroke-width="1.1"/><path d="M56.6 713.6H70.4" stroke="#2c2c2c" stroke-width="1"/>
<rect x="66.6" y="729.8000000000001" width="13.8" height="10" rx="0.8" stroke="#2c2c2c" stroke-width="1.1"/><path d="M66.6 732.4000000000001H80.4" stroke="#2c2c2c" stroke-width="1"/>
<path d="M56.6 749.4Q56.6 748.0 58 748.0H69Q70.4 748.0 70.4 749.4V757.4Q70.4 758.8 69 758.8H58Q56.6 758.8 56.6 757.4Z" stroke="#2c2c2c" stroke-width="1.1"/><path d="M66 748.0V750.1999999999999H70.4" stroke="#2c2c2c" stroke-width="1"/>
<g transform="translate(55.8 766.8)"><rect x="0.6" y="0.6" width="14" height="10.4" rx="0.8" stroke="#2c2c2c" stroke-width="1.1" fill="#fff"/><path d="M0.6 3.2H14.6" stroke="#2c2c2c" stroke-width="1"/><rect x="8.6" y="6.4" width="4.8" height="4.4" fill="#fff" stroke="#2c2c2c" stroke-width="1"/><path d="M10 6.2V5.4A1 1 0 0 1 12 5.4V6.2M11 8v1.4" stroke="#2c2c2c" stroke-width="0.9"/></g>
</svg>
<div id="tx">
<span class="t" id="t0" style="left:46.28px;top:43.84px;font-size:12px;color:#000;transform:scaleX(0.9922);">mobileApp.less</span>
<span class="t" id="t1" style="left:177.28px;top:43.84px;font-size:12px;color:#000;transform:scaleX(1.0048);">main</span>
<span class="t" id="t2" style="left:28.78px;top:787.84px;font-size:12px;color:#000;transform:scaleX(0.9446);">Design</span>
<span class="t" id="t3" style="left:72.53px;top:787.84px;font-size:12px;color:#000;transform:scaleX(0.9295);">Parts</span>
<span class="t" id="t4" style="left:106.28px;top:787.84px;font-size:12px;color:#000;transform:scaleX(0.9673);">Tab sequence</span>
<span class="t" id="t5" style="left:186.03px;top:787.84px;font-size:12px;color:#000;transform:scaleX(0.9696);">Security</span>
<span class="t" id="t6" style="left:45.53px;top:817.84px;font-size:12px;color:#000;transform:scaleX(0.9823);">Problems</span>
<span class="t" id="t7" style="left:123.53px;top:817.84px;font-size:12px;color:#000;transform:scaleX(0.9775);">Console</span>
<span class="t" id="t8" style="left:216.78px;top:817.84px;font-size:12px;color:#000;transform:scaleX(0.8893);">Tasks</span>
<span class="t" id="t9" style="left:272.53px;top:817.84px;font-size:12px;color:#000;transform:scaleX(0.9835);">Bookmarks</span>
<span class="t" id="t10" style="left:360.28px;top:817.84px;font-size:12px;color:#000;transform:scaleX(0.8951);">Search</span>
<span class="t" id="t11" style="left:24.78px;top:838.84px;font-size:12px;color:#000;transform:scaleX(0.9839);">[Debug Console] mobileApp.js [JavaScript]</span>
<span class="t" id="t12" style="left:26.30px;top:857.05px;font-size:11.67px;color:#ff1010;font-family:'Liberation Mono', monospace;-webkit-text-stroke:0.12px #ff1010;">WARN org.sablo.websocket.WebsocketEndpoint - return value of the service call: initialized is ignored because t</span>
<span class="t" id="t13" style="left:37.10px;top:139.30px;font-size:15px;color:#52616d;font-style:italic;transform:scaleX(0.9615);">Search</span>
<span class="t" id="t14" style="left:46.08px;top:174.84px;font-size:12px;color:#000;">Get more components</span>
<span class="t" id="t15" style="left:46.04px;top:205.45px;font-size:16px;color:#6e6a62;transform:scaleX(0.9937);">Commonly Used</span>
<span class="t" id="t16" style="left:46.04px;top:378.45px;font-size:16px;color:#6e6a62;transform:scaleX(0.9561);">Servoy Core</span>
<span class="t" id="t17" style="left:46.04px;top:470.45px;font-size:16px;color:#6e6a62;transform:scaleX(1.0160);">Buttons &amp; Text</span>
<span class="t" id="t18" style="left:46.04px;top:623.45px;font-size:16px;color:#6e6a62;transform:scaleX(0.9821);">Form Containers</span>
<span class="t" id="t19" style="left:75.78px;top:251.84px;font-size:12px;color:#1a1a1a;transform:scaleX(1.0169);">Button</span>
<span class="t" id="t20" style="left:75.78px;top:272.84px;font-size:12px;color:#1a1a1a;transform:scaleX(0.9556);">DataLabel</span>
<span class="t" id="t21" style="left:75.78px;top:291.84px;font-size:12px;color:#1a1a1a;transform:scaleX(0.9829);">Image</span>
<span class="t" id="t22" style="left:75.78px;top:310.84px;font-size:12px;color:#1a1a1a;transform:scaleX(0.9290);">Label</span>
<span class="t" id="t23" style="left:75.78px;top:516.84px;font-size:12px;color:#1a1a1a;transform:scaleX(1.0169);">Button</span>
<span class="t" id="t24" style="left:75.78px;top:537.84px;font-size:12px;color:#1a1a1a;transform:scaleX(0.9556);">DataLabel</span>
<span class="t" id="t25" style="left:75.78px;top:556.84px;font-size:12px;color:#1a1a1a;transform:scaleX(0.9829);">Image</span>
<span class="t" id="t26" style="left:75.78px;top:575.84px;font-size:12px;color:#1a1a1a;transform:scaleX(0.9290);">Label</span>
<span class="t" id="t27" style="left:75.78px;top:332.84px;font-size:12px;color:#1a1a1a;transform:scaleX(0.9613);">ResponsiveContainer</span>
<span class="t" id="t28" style="left:75.78px;top:424.84px;font-size:12px;color:#1a1a1a;transform:scaleX(0.9613);">ResponsiveContainer</span>
<span class="t" id="t29" style="left:75.78px;top:670.84px;font-size:12px;color:#1a1a1a;transform:scaleX(0.9700);">AccordionPanel</span>
<span class="t" id="t30" style="left:85.53px;top:689.84px;font-size:12px;color:#1a1a1a;transform:scaleX(1.0061);">tab</span>
<span class="t" id="t31" style="left:75.78px;top:708.84px;font-size:12px;color:#1a1a1a;transform:scaleX(0.9430);">Collapse</span>
<span class="t" id="t32" style="left:85.53px;top:727.84px;font-size:12px;color:#1a1a1a;transform:scaleX(0.9910);">collapsible</span>
<span class="t" id="t33" style="left:75.78px;top:746.84px;font-size:12px;color:#1a1a1a;transform:scaleX(0.9949);">Form container</span>
<span class="t" id="t34" style="left:75.78px;top:765.84px;font-size:12px;color:#1a1a1a;transform:scaleX(0.9962);">FormComponentContainer</span>
<span class="t" id="t35" style="left:317.16px;top:166.15px;font-size:14px;color:#1a1a2a;">My Orders</span>
<span class="t" id="t36" style="left:850.78px;top:43.84px;font-size:12px;color:#000;transform:scaleX(1.0200);">Outline</span>
<span class="t" id="t37" style="left:917.68px;top:43.84px;font-size:12px;color:#000;transform:scaleX(0.9605);">Properties</span>
<span class="t" id="t38" style="left:1020.53px;top:43.84px;font-size:12px;color:#000;transform:scaleX(0.9560);">Favorites</span>
<span class="t" id="t39" style="left:829.88px;top:64.84px;font-size:12px;color:#000;transform:scaleX(1.0089);">Form - main - css position layout</span>
<span class="t" id="t40" style="left:835.53px;top:83.84px;font-size:12px;color:#000;transform:scaleX(0.9897);">Property</span>
<span class="t" id="t41" style="left:1048.88px;top:83.84px;font-size:12px;color:#000;transform:scaleX(0.9506);">Value</span>
<span class="t" id="t42" style="left:850.78px;top:104.84px;font-size:12px;color:#000;transform:scaleX(1.0070);">Commands</span>
<span class="t" id="t43" style="left:866.78px;top:122.84px;font-size:12px;color:#000;transform:scaleX(0.9768);">onSort</span>
<span class="t" id="t44" style="left:850.78px;top:140.84px;font-size:12px;color:#c6c8c6;transform:scaleX(0.9210);">Events</span>
<span class="t" id="t45" style="left:866.78px;top:158.84px;font-size:12px;color:#000;transform:scaleX(0.9918);">onBeforeHide</span>
<span class="t" id="t46" style="left:1048.78px;top:158.84px;font-size:12px;color:#000;transform:scaleX(1.0130);">-none-</span>
<span class="t" id="t47" style="left:866.78px;top:176.84px;font-size:12px;color:#000;transform:scaleX(0.9741);">onElementDataChange</span>
<span class="t" id="t48" style="left:1048.78px;top:176.84px;font-size:12px;color:#000;transform:scaleX(1.0130);">-none-</span>
<span class="t" id="t49" style="left:866.78px;top:194.84px;font-size:12px;color:#000;transform:scaleX(0.9634);">onElementFocusGained</span>
<span class="t" id="t50" style="left:1048.78px;top:194.84px;font-size:12px;color:#000;transform:scaleX(1.0130);">-none-</span>
<span class="t" id="t51" style="left:866.78px;top:212.84px;font-size:12px;color:#000;transform:scaleX(0.9717);">onElementFocusLost</span>
<span class="t" id="t52" style="left:1048.78px;top:212.84px;font-size:12px;color:#000;transform:scaleX(1.0130);">-none-</span>
<span class="t" id="t53" style="left:866.78px;top:230.84px;font-size:12px;color:#000;transform:scaleX(1.0265);">onHide</span>
<span class="t" id="t54" style="left:1048.78px;top:230.84px;font-size:12px;color:#000;transform:scaleX(1.0130);">-none-</span>
<span class="t" id="t55" style="left:866.78px;top:248.84px;font-size:12px;color:#000;transform:scaleX(0.9873);">onLoad</span>
<span class="t" id="t56" style="left:1048.78px;top:248.84px;font-size:12px;color:#000;transform:scaleX(1.0130);">-none-</span>
<span class="t" id="t57" style="left:866.78px;top:266.84px;font-size:12px;color:#000;transform:scaleX(0.9641);">onRecordEditStart</span>
<span class="t" id="t58" style="left:1048.78px;top:266.84px;font-size:12px;color:#000;transform:scaleX(1.0130);">-none-</span>
<span class="t" id="t59" style="left:866.78px;top:284.84px;font-size:12px;color:#000;transform:scaleX(0.9706);">onRecordEditStop</span>
<span class="t" id="t60" style="left:1048.78px;top:284.84px;font-size:12px;color:#000;transform:scaleX(1.0130);">-none-</span>
<span class="t" id="t61" style="left:866.78px;top:302.84px;font-size:12px;color:#000;transform:scaleX(0.9693);">onRecordSelection</span>
<span class="t" id="t62" style="left:1048.78px;top:302.84px;font-size:12px;color:#000;transform:scaleX(1.0130);">-none-</span>
<span class="t" id="t63" style="left:866.78px;top:320.84px;font-size:12px;color:#000;transform:scaleX(0.9152);">onResize</span>
<span class="t" id="t64" style="left:1048.78px;top:320.84px;font-size:12px;color:#000;transform:scaleX(1.0130);">-none-</span>
<span class="t" id="t65" style="left:866.78px;top:338.84px;font-size:12px;color:#000;transform:scaleX(0.9865);">onShow</span>
<span class="t" id="t66" style="left:1048.78px;top:338.84px;font-size:12px;color:#000;transform:scaleX(1.0130);">-none-</span>
<span class="t" id="t67" style="left:866.78px;top:356.84px;font-size:12px;color:#000;transform:scaleX(0.9846);">onUnLoad</span>
<span class="t" id="t68" style="left:1048.78px;top:356.84px;font-size:12px;color:#000;transform:scaleX(1.0130);">-none-</span>
<span class="t" id="t69" style="left:850.78px;top:374.84px;font-size:12px;color:#000;transform:scaleX(0.9605);">Properties</span>
<span class="t" id="t70" style="left:866.78px;top:392.84px;font-size:12px;color:#000;transform:scaleX(1.0442);">comment</span>
<span class="t" id="t71" style="left:866.78px;top:410.84px;font-size:12px;color:#000;transform:scaleX(0.9536);">dataSource</span>
<span class="t" id="t72" style="left:1048.78px;top:410.84px;font-size:12px;color:#000;transform:scaleX(1.0130);">-none-</span>
<span class="t" id="t73" style="left:866.78px;top:428.84px;font-size:12px;color:#000;transform:scaleX(0.9707);">deprecated</span>
<span class="t" id="t74" style="left:866.78px;top:446.84px;font-size:12px;color:#000;transform:scaleX(0.9850);">designTimeProperties</span>
<span class="t" id="t75" style="left:1048.78px;top:446.84px;font-size:12px;color:#000;transform:scaleX(0.9935);">click to add</span>
<span class="t" id="t76" style="left:866.78px;top:464.84px;font-size:12px;color:#000;transform:scaleX(0.9896);">encapsulation</span>
<span class="t" id="t77" style="left:1048.78px;top:464.84px;font-size:12px;color:#000;transform:scaleX(0.9878);">Hide Dataproviders,Hide Foundset,Hi.</span>
<span class="t" id="t78" style="left:866.78px;top:482.84px;font-size:12px;color:#000;transform:scaleX(0.9609);">extendsForm</span>
<span class="t" id="t79" style="left:1048.78px;top:482.84px;font-size:12px;color:#000;transform:scaleX(1.0130);">-none-</span>
<span class="t" id="t80" style="left:866.78px;top:500.84px;font-size:12px;color:#000;transform:scaleX(1.0179);">height</span>
<span class="t" id="t81" style="left:1048.78px;top:500.84px;font-size:12px;color:#000;transform:scaleX(0.8557);">480</span>
<span class="t" id="t82" style="left:866.78px;top:518.84px;font-size:12px;color:#000;transform:scaleX(1.0037);">initialSort</span>
<span class="t" id="t83" style="left:866.78px;top:536.84px;font-size:12px;color:#000;transform:scaleX(0.9920);">name</span>
<span class="t" id="t84" style="left:1048.78px;top:536.84px;font-size:12px;color:#000;transform:scaleX(0.9952);">main</span>
<span class="t" id="t85" style="left:866.78px;top:554.84px;font-size:12px;color:#000;transform:scaleX(0.9753);">namedFoundSet</span>
<span class="t" id="t86" style="left:866.78px;top:572.84px;font-size:12px;color:#000;transform:scaleX(1.0033);">navigator</span>
<span class="t" id="t87" style="left:1048.78px;top:572.84px;font-size:12px;color:#000;transform:scaleX(1.0130);">-none-</span>
<span class="t" id="t88" style="left:866.78px;top:590.84px;font-size:12px;color:#000;transform:scaleX(0.9646);">scrollbars</span>
<span class="t" id="t89" style="left:866.78px;top:608.84px;font-size:12px;color:#000;transform:scaleX(1.0052);">selectionMode</span>
<span class="t" id="t90" style="left:866.78px;top:626.84px;font-size:12px;color:#000;transform:scaleX(0.9242);">styleClass</span>
<span class="t" id="t91" style="left:866.78px;top:644.84px;font-size:12px;color:#000;transform:scaleX(0.9964);">titleText</span>
<span class="t" id="t92" style="left:866.78px;top:662.84px;font-size:12px;color:#000;transform:scaleX(0.9808);">transparent</span>
<span class="t" id="t93" style="left:1066.03px;top:662.84px;font-size:12px;color:#000;transform:scaleX(0.9716);">false</span>
<span class="t" id="t94" style="left:866.78px;top:680.84px;font-size:12px;color:#000;transform:scaleX(1.0544);">width</span>
<span class="t" id="t95" style="left:1048.78px;top:680.84px;font-size:12px;color:#000;transform:scaleX(0.8557);">324</span>
</div>
</body></html>
